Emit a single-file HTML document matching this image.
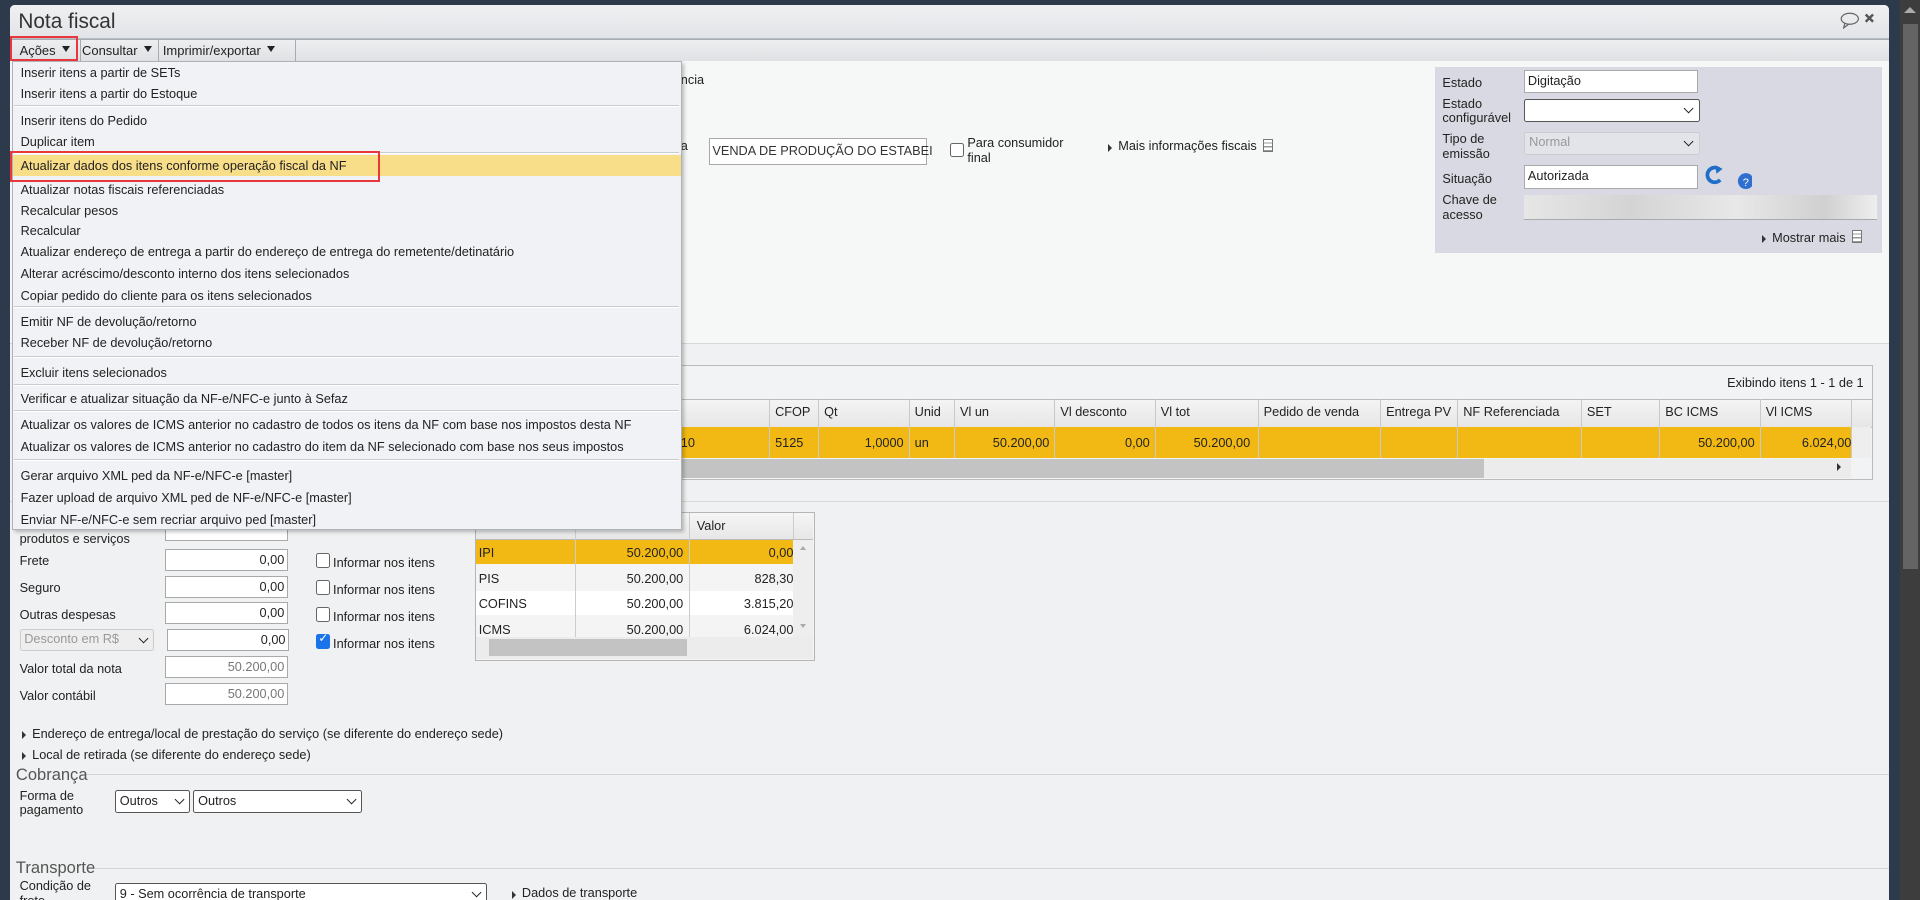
<!DOCTYPE html>
<html><head><meta charset="utf-8">
<style>
html,body{margin:0;padding:0;width:1920px;height:899px;overflow:hidden;background:#2c3a4c;}
#r{position:absolute;left:0;top:0;width:1568px;height:735px;zoom:1.22449;font-family:"Liberation Sans",sans-serif;font-size:10.4px;color:#222;}
.a{position:absolute;white-space:nowrap;}
.inp{position:absolute;background:#fff;border:1px solid #a9a9a9;box-sizing:border-box;font-size:10.4px;line-height:16px;padding:0 2px;}
.sel{position:absolute;background:#fff;border:1px solid #555;border-radius:2px;box-sizing:border-box;line-height:15px;padding:0 3px;}
.sel:after{content:"";position:absolute;right:5px;top:4px;width:5px;height:5px;border-right:1.5px solid #222;border-bottom:1.5px solid #222;transform:rotate(45deg);}
.cb{position:absolute;width:10px;height:10px;border:1px solid #666;border-radius:2px;background:#fff;}
.tri{display:inline-block;width:0;height:0;border-top:4px solid transparent;border-bottom:4px solid transparent;border-left:4px solid #333;margin-right:5px;vertical-align:-1px;}
.dd{display:inline-block;width:0;height:0;border-left:4px solid transparent;border-right:4px solid transparent;border-top:5px solid #222;margin-left:5px;vertical-align:2px;}
.mi{position:absolute;left:6px;height:17px;line-height:17px;}
.sep{position:absolute;left:1px;right:1px;height:0;border-top:1px solid #c8cbd0;border-bottom:1px solid #fff;}
.col{position:absolute;top:0;height:100%;border-left:1px solid #c9c9c9;}
.ic{display:inline-block;width:7px;height:9px;border:1px solid #777;margin-left:5px;vertical-align:-1px;background:repeating-linear-gradient(#fff 0 2px,#999 2px 3px);}
</style></head><body>
<div id="r">
<div class="a" style="left:1552px;top:0;width:16px;height:735px;background:#3d3d3d"></div>
<div class="a" style="left:1554px;top:20px;width:12px;height:445px;background:#646464"></div>
<div class="a" style="left:1555px;top:6px;width:0;height:0;border-left:5px solid transparent;border-right:5px solid transparent;border-bottom:5px solid #aaa"></div>
<div class="a" style="left:8px;top:4px;width:1535px;height:731px;background:#f0f1f2;border-radius:4px 4px 0 0;overflow:hidden">
  <div class="a" style="left:0;top:0;width:1535px;height:27px;background:linear-gradient(#eef0f2,#e2e4e7);border-bottom:2px solid #b9bec4"></div>
  <div class="a" style="left:7px;top:4px;font-size:17px;color:#333">Nota fiscal</div>
  <svg class="a" style="left:1495px;top:6px" width="32" height="14"><ellipse cx="8" cy="5.5" rx="7" ry="4.5" fill="none" stroke="#666" stroke-width="1"/><path d="M4 9 L3 13 L7 10" fill="none" stroke="#666"/><path d="M21 2l6 6M27 2l-6 6" stroke="#555" stroke-width="2"/></svg>
  <div class="a" style="left:0;top:28px;width:1535px;height:17px;background:linear-gradient(#eceef0,#dfe1e4);border:1px solid #a6acb3;border-right:none"></div>
  <div class="a" style="left:8px;top:30px;line-height:15px;font-size:10.6px">Ações<span class="dd"></span></div>
  <div class="a" style="left:57px;top:28px;height:18px;border-left:1px solid #a6acb3"></div>
  <div class="a" style="left:59px;top:30px;line-height:15px;font-size:10.6px">Consultar<span class="dd"></span></div>
  <div class="a" style="left:121px;top:28px;height:18px;border-left:1px solid #a6acb3"></div>
  <div class="a" style="left:125px;top:30px;line-height:15px;font-size:10.6px">Imprimir/exportar<span class="dd"></span></div>
  <div class="a" style="left:233px;top:28px;height:18px;border-left:1px solid #a6acb3"></div>
  <div class="a" style="left:0;top:46px;width:1535px;height:230px;background:#f6f7f7;border-bottom:1px solid #d8d8d8"></div>
  <div class="a" style="left:548px;top:55px">ncia</div>
  <div class="a" style="left:548px;top:109px">a</div>
  <div class="inp" style="left:571px;top:109px;width:178px;height:22px;line-height:20px;color:#333">VENDA DE PRODUÇÃO DO ESTABEI</div>
  <div class="cb" style="left:768px;top:113px"></div>
  <div class="a" style="left:782px;top:107px;line-height:12px">Para consumidor<br>final</div>
  <div class="a" style="left:897px;top:109px"><span class="tri"></span>Mais informações fiscais<span class="ic"></span></div>
  <div class="a" style="left:1164px;top:51px;width:365px;height:152px;background:#d9d9e3"></div>
  <div class="a" style="left:1170px;top:57px">Estado</div>
  <div class="inp" style="left:1237px;top:53px;width:142px;height:19px">Digitação</div>
  <div class="a" style="left:1170px;top:75px;line-height:12px">Estado<br>configurável</div>
  <div class="sel" style="left:1237px;top:77px;width:143px;height:19px"></div>
  <div class="a" style="left:1170px;top:104px;line-height:12px">Tipo de<br>emissão</div>
  <div class="sel" style="left:1237px;top:104px;width:143px;height:19px;background:#e3e3ea;border-color:#ccc;color:#999">Normal</div>
  <div class="a" style="left:1170px;top:136px">Situação</div>
  <div class="inp" style="left:1237px;top:131px;width:142px;height:19px">Autorizada</div>
  <svg class="a" style="left:1383px;top:130px" width="40" height="22"><path d="M13 4 A6 6 0 1 0 14 13" fill="none" stroke="#1f6fc9" stroke-width="3"/><path d="M10 1 L16 4 L11 8Z" fill="#1f6fc9"/><circle cx="35" cy="14" r="6.5" fill="#2f6fcf"/><text x="35" y="18" font-size="9" fill="#fff" text-anchor="middle" font-family="Liberation Sans">?</text></svg>
  <div class="a" style="left:1170px;top:154px;line-height:12px">Chave de<br>acesso</div>
  <div class="a" style="left:1237px;top:155px;width:288px;height:20px;background:linear-gradient(90deg,#e6e6e6,#d4d4d4 30%,#e8e8e8 60%,#d0d0d0 85%,#eee);border-bottom:1px solid #aaa"></div>
  <div class="a" style="left:1431px;top:184px"><span class="tri"></span>Mostrar mais<span class="ic"></span></div>
  <div class="a" style="left:2px;top:294px;width:1518px;height:92px;border:1px solid #bbb;background:#f2f3f4"></div>
  <div class="a" style="left:1300px;top:302px;width:214px;text-align:right">Exibindo itens 1 - 1 de 1</div>
  <div class="a" style="left:3px;top:322px;width:1518px;height:22px;background:linear-gradient(#f4f4f4,#e6e6e6);border-top:1px solid #bbb;border-bottom:1px solid #bbb"></div>
  <div class="a" style="left:3px;top:345px;width:1501px;height:25px;background:#f2b914"></div>
  <div class="a" style="left:1504px;top:345px;width:16px;height:25px;background:#eee"></div>
  <div class="a" style="left:3px;top:371px;width:1501px;height:15px;background:#ececec"></div>
  <div class="a" style="left:3px;top:371px;width:1201px;height:15px;background:#c3c3c3"></div>
  <div class="a" style="left:1492px;top:374px;width:0;height:0;border-top:4px solid transparent;border-bottom:4px solid transparent;border-left:4px solid #333"></div>
  <div class="a" style="left:0;top:322px;width:1520px;height:48px">
    <div class="col" style="left:620px"></div><div class="col" style="left:660px"></div><div class="col" style="left:734px"></div><div class="col" style="left:771px"></div><div class="col" style="left:853px"></div><div class="col" style="left:935px"></div><div class="col" style="left:1019px"></div><div class="col" style="left:1119px"></div><div class="col" style="left:1182px"></div><div class="col" style="left:1283px"></div><div class="col" style="left:1347px"></div><div class="col" style="left:1429px"></div><div class="col" style="left:1504px"></div>
  </div>
  <div class="a" style="top:326px;left:625px">CFOP</div><div class="a" style="top:326px;left:665px">Qt</div><div class="a" style="top:326px;left:739px">Unid</div><div class="a" style="top:326px;left:776px">Vl un</div><div class="a" style="top:326px;left:858px">Vl desconto</div><div class="a" style="top:326px;left:940px">Vl tot</div><div class="a" style="top:326px;left:1024px">Pedido de venda</div><div class="a" style="top:326px;left:1124px">Entrega PV</div><div class="a" style="top:326px;left:1187px">NF Referenciada</div><div class="a" style="top:326px;left:1288px">SET</div><div class="a" style="top:326px;left:1352px">BC ICMS</div><div class="a" style="top:326px;left:1434px">Vl ICMS</div>
  <div class="a" style="top:351px;left:548px">10</div><div class="a" style="top:351px;left:625px">5125</div><div class="a" style="top:351px;left:660px;width:70px;text-align:right">1,0000</div><div class="a" style="top:351px;left:739px">un</div><div class="a" style="top:351px;left:771px;width:78px;text-align:right">50.200,00</div><div class="a" style="top:351px;left:853px;width:78px;text-align:right">0,00</div><div class="a" style="top:351px;left:935px;width:78px;text-align:right">50.200,00</div><div class="a" style="top:351px;left:1347px;width:78px;text-align:right">50.200,00</div><div class="a" style="top:351px;left:1429px;width:75px;text-align:right;overflow:hidden">6.024,00</div>
  <div class="a" style="left:0;top:405px;width:1535px;border-top:1px solid #d8d8d8"></div>
  <div class="a" style="left:8px;top:430px">produtos e serviços</div>
  <div class="inp" style="left:127px;top:420px;width:100px;height:18px"></div>
  <div class="a" style="left:8px;top:448px">Frete</div><div class="inp" style="left:127px;top:444px;width:100px;height:18px;text-align:right">0,00</div>
  <div class="a" style="left:8px;top:470px">Seguro</div><div class="inp" style="left:127px;top:466px;width:100px;height:18px;text-align:right">0,00</div>
  <div class="a" style="left:8px;top:492px">Outras despesas</div><div class="inp" style="left:127px;top:488px;width:100px;height:18px;text-align:right">0,00</div>
  <div class="sel" style="left:8px;top:510px;width:110px;height:18px;border-color:#ccc;background:#eee;color:#999">Desconto em R$</div>
  <div class="inp" style="left:128px;top:510px;width:100px;height:18px;text-align:right">0,00</div>
  <div class="a" style="left:8px;top:536px">Valor total da nota</div><div class="inp" style="left:127px;top:532px;width:100px;height:18px;text-align:right;color:#777">50.200,00</div>
  <div class="a" style="left:8px;top:558px">Valor contábil</div><div class="inp" style="left:127px;top:554px;width:100px;height:18px;text-align:right;color:#777">50.200,00</div>
  <div class="cb" style="left:250px;top:448px"></div><div class="a" style="left:264px;top:449px">Informar nos itens</div>
  <div class="cb" style="left:250px;top:470px"></div><div class="a" style="left:264px;top:471px">Informar nos itens</div>
  <div class="cb" style="left:250px;top:492px"></div><div class="a" style="left:264px;top:493px">Informar nos itens</div>
  <div class="cb" style="left:250px;top:514px;background:#1a73e8;border-color:#1a73e8"></div><div class="a" style="left:252px;top:511px;color:#fff;font-size:10px">✓</div><div class="a" style="left:264px;top:515px">Informar nos itens</div>
  <div class="a" style="left:380px;top:414px;width:276px;height:120px;border:1px solid #b5b5b5;background:#f4f4f4"></div>
  <div class="a" style="left:381px;top:415px;width:275px;height:21px;background:linear-gradient(#f5f5f5,#e7e7e7);border-bottom:1px solid #bbb"></div>
  <div class="a" style="left:381px;top:437px;width:259px;height:20px;background:#f2b914"></div>
  <div class="a" style="left:381px;top:479px;width:259px;height:19px;background:#fff"></div>
  <div class="a" style="left:640px;top:437px;width:16px;height:79px;background:#eee"></div>
  <div class="a" style="left:645px;top:442px;width:0;height:0;border-left:3px solid transparent;border-right:3px solid transparent;border-bottom:4px solid #aaa"></div>
  <div class="a" style="left:645px;top:506px;width:0;height:0;border-left:3px solid transparent;border-right:3px solid transparent;border-top:4px solid #aaa"></div>
  <div class="a" style="left:381px;top:516px;width:275px;height:18px;background:#ececec"></div>
  <div class="a" style="left:391px;top:518px;width:162px;height:14px;background:#c3c3c3"></div>
  <div class="a" style="left:462px;top:415px;height:101px;border-left:1px solid #ccc"></div>
  <div class="a" style="left:555px;top:415px;height:101px;border-left:1px solid #ccc"></div>
  <div class="a" style="left:640px;top:415px;height:21px;border-left:1px solid #ccc"></div>
  <div class="a" style="left:561px;top:419px">Valor</div>
  <div class="a" style="left:383px;top:441px">IPI</div><div class="a" style="left:462px;top:441px;width:88px;text-align:right">50.200,00</div><div class="a" style="left:555px;top:441px;width:85px;text-align:right">0,00</div>
  <div class="a" style="left:383px;top:462px">PIS</div><div class="a" style="left:462px;top:462px;width:88px;text-align:right">50.200,00</div><div class="a" style="left:555px;top:462px;width:85px;text-align:right">828,30</div>
  <div class="a" style="left:383px;top:483px">COFINS</div><div class="a" style="left:462px;top:483px;width:88px;text-align:right">50.200,00</div><div class="a" style="left:555px;top:483px;width:85px;text-align:right">3.815,20</div>
  <div class="a" style="left:383px;top:504px">ICMS</div><div class="a" style="left:462px;top:504px;width:88px;text-align:right">50.200,00</div><div class="a" style="left:555px;top:504px;width:85px;text-align:right">6.024,00</div>
  <div class="a" style="left:10px;top:589px"><span class="tri"></span>Endereço de entrega/local de prestação do serviço (se diferente do endereço sede)</div>
  <div class="a" style="left:10px;top:606px"><span class="tri"></span>Local de retirada (se diferente do endereço sede)</div>
  <div class="a" style="left:60px;top:628px;width:1475px;border-top:1px solid #d5d5d5"></div>
  <div class="a" style="left:5px;top:621px;font-size:13.5px;color:#555">Cobrança</div>
  <div class="a" style="left:8px;top:640px;line-height:12px">Forma de<br>pagamento</div>
  <div class="sel" style="left:86px;top:641px;width:61px;height:19px;line-height:17px">Outros</div>
  <div class="sel" style="left:150px;top:641px;width:138px;height:19px;line-height:17px">Outros</div>
  <div class="a" style="left:68px;top:705px;width:1467px;border-top:1px solid #d5d5d5"></div>
  <div class="a" style="left:5px;top:697px;font-size:13.5px;color:#555">Transporte</div>
  <div class="a" style="left:8px;top:714px;line-height:12px">Condição de<br>frete</div>
  <div class="sel" style="left:86px;top:717px;width:304px;height:19px;line-height:17px">9 - Sem ocorrência de transporte</div>
  <div class="a" style="left:410px;top:719px"><span class="tri"></span>Dados de transporte</div>
  <div class="a" style="left:2px;top:46px;width:545px;height:381px;background:#f0f2f5;border:1px solid #aeb3ba;box-shadow:2px 2px 3px rgba(0,0,0,.25)">
    <div class="mi" style="top:1px">Inserir itens a partir de SETs</div>
    <div class="mi" style="top:18px">Inserir itens a partir do Estoque</div>
    <div class="sep" style="top:35px"></div>
    <div class="mi" style="top:40px">Inserir itens do Pedido</div>
    <div class="mi" style="top:57px">Duplicar item</div>
    <div class="sep" style="top:73px"></div>
    <div class="a" style="left:0;top:76px;width:545px;height:17px;background:#f9de8a"></div>
    <div class="mi" style="top:77px">Atualizar dados dos itens conforme operação fiscal da NF</div>
    <div class="mi" style="top:96px">Atualizar notas fiscais referenciadas</div>
    <div class="mi" style="top:113px">Recalcular pesos</div>
    <div class="mi" style="top:130px">Recalcular</div>
    <div class="mi" style="top:147px">Atualizar endereço de entrega a partir do endereço de entrega do remetente/detinatário</div>
    <div class="mi" style="top:165px">Alterar acréscimo/desconto interno dos itens selecionados</div>
    <div class="mi" style="top:183px">Copiar pedido do cliente para os itens selecionados</div>
    <div class="sep" style="top:199px"></div>
    <div class="mi" style="top:204px">Emitir NF de devolução/retorno</div>
    <div class="mi" style="top:221px">Receber NF de devolução/retorno</div>
    <div class="sep" style="top:240px"></div>
    <div class="mi" style="top:246px">Excluir itens selecionados</div>
    <div class="sep" style="top:263px"></div>
    <div class="mi" style="top:267px">Verificar e atualizar situação da NF-e/NFC-e junto à Sefaz</div>
    <div class="sep" style="top:284px"></div>
    <div class="mi" style="top:288px">Atualizar os valores de ICMS anterior no cadastro de todos os itens da NF com base nos impostos desta NF</div>
    <div class="mi" style="top:306px">Atualizar os valores de ICMS anterior no cadastro do item da NF selecionado com base nos seus impostos</div>
    <div class="sep" style="top:324px"></div>
    <div class="mi" style="top:330px">Gerar arquivo XML ped da NF-e/NFC-e [master]</div>
    <div class="mi" style="top:348px">Fazer upload de arquivo XML ped de NF-e/NFC-e [master]</div>
    <div class="mi" style="top:366px">Enviar NF-e/NFC-e sem recriar arquivo ped [master]</div>
  </div>
  <div class="a" style="left:0;top:25px;width:56px;height:21px;border:2px solid #e8383d;box-sizing:border-box"></div>
  <div class="a" style="left:0;top:119px;width:302px;height:26px;border:2px solid #e8383d;box-sizing:border-box"></div>
</div>
</div>
</body></html>
